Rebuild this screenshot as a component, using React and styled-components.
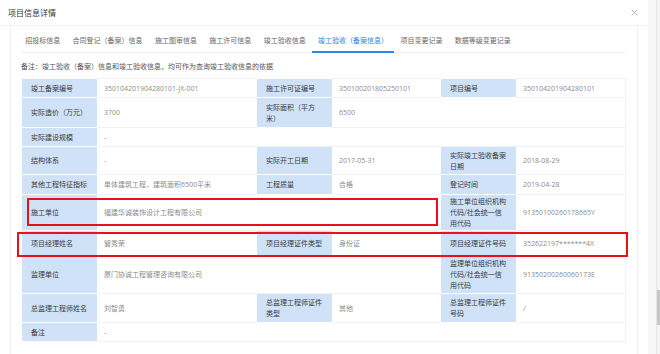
import React from "react";
import styled, { createGlobalStyle } from "styled-components";

const Global = createGlobalStyle`
  html, body { margin: 0; padding: 0; background: #fff; }
  body { font-family: "Open Sans", "Noto Sans CJK SC", sans-serif; overflow: hidden; }
  #root { width: 660px; height: 354px; }
`;

const Page = styled.div`
  display: flex;
  width: 660px;
  height: 354px;
  overflow: hidden;
`;

const Modal = styled.div`
  width: 648px;
  flex: none;
  background: #fff;
  display: flex;
  flex-direction: column;
`;

const Header = styled.div`
  height: 26px;
  flex: none;
  display: flex;
  align-items: center;
  justify-content: space-between;
  padding: 0 10px 0 8px;
  border-bottom: 1px solid #f0f0f0;
  box-sizing: border-box;
`;

const Title = styled.div`
  font-family: "Noto Sans CJK SC", sans-serif;
  font-size: 8px;
  color: #333;
`;

const Close = styled.svg`
  width: 7px;
  height: 7px;
  display: block;
`;

const Body = styled.div`
  padding: 0 10px;
  flex: 1;
  display: flex;
`;

const Panel = styled.div`
  flex: 1;
  border-left: 1px solid #f2f2f2;
  border-right: 1px solid #f2f2f2;
  padding: 0 12px 0 11px;
`;

const TabBar = styled.div`
  height: 27px;
  border-bottom: 1px solid #ececec;
  box-sizing: border-box;
  display: flex;
  align-items: stretch;
  margin: 0;
`;

const TabList = styled.div`
  display: flex;
  margin-left: -3px;
`;

const Tab = styled.div`
  padding: 0 6.2px;
  display: flex;
  align-items: center;
  font-family: "Noto Sans CJK SC", sans-serif;
  font-size: 7px;
  color: ${(p) => (p.$active ? "#2b85e4" : "#666")};
  border-bottom: 2px solid ${(p) => (p.$active ? "#2b85e4" : "transparent")};
  margin-bottom: -1px;
  padding-top: 2px;
  white-space: nowrap;
`;

const Note = styled.div`
  font-family: "Noto Sans CJK SC", sans-serif;
  font-size: 7px;
  color: #555;
  height: 25px;
  display: flex;
  align-items: center;
  margin-left: -1px;
`;

const TableWrap = styled.div`
  position: relative;
  width: 603px;
`;

const Table = styled.table`
  width: 603px;
  border-collapse: collapse;
  table-layout: fixed;
`;

const Row = styled.tr`
  height: ${(p) => p.$h}px;
`;

const Label = styled.td`
  background: #cfe2f8;
  color: #3a3a3a;
  font-family: "Noto Sans CJK SC", sans-serif;
  font-size: 7px;
  line-height: 11px;
  padding: 0 8px 0 9px;
  border-top: 1px solid #fff;
  border-bottom: 1px solid #fff;
  vertical-align: middle;
  box-sizing: border-box;
  word-break: break-all;
`;

const Value = styled.td`
  color: #8c8c8c;
  font-family: "Open Sans", "Noto Sans CJK SC", sans-serif;
  font-size: 7px;
  line-height: 11px;
  padding: 0 7px;
  border-top: 1px solid #eef0f2;
  border-bottom: 1px solid #eef0f2;
  vertical-align: middle;
  box-sizing: border-box;
  &:last-child { border-right: 1px solid #eef0f2; }
`;

const Mark = styled.div`
  position: absolute;
  border: 2px solid #e3121c;
  box-sizing: border-box;
  pointer-events: none;
`;

const Gutter = styled.div`
  flex: 1;
  background: #f6f6f6;
  display: flex;
  justify-content: flex-end;
`;

const Track = styled.div`
  width: 3px;
  border-left: 1px solid #e4e4e4;
  background: #f3f3f3;
  display: flex;
  flex-direction: column;
`;

const Thumb = styled.div`
  margin-top: 290px;
  height: 35px;
  background: #c6c6c6;
`;

const tabs = [
  "招投标信息",
  "合同登记（备案）信息",
  "施工图审信息",
  "施工许可信息",
  "竣工验收信息",
  "竣工验收（备案信息）",
  "项目变更记录",
  "数据等级变更记录",
];

export default function App() {
  return (
    <Page>
      <Global />
      <Modal>
        <Header>
          <Title>项目信息详情</Title>
          <Close viewBox="0 0 10 10">
            <path d="M1 1L9 9M9 1L1 9" stroke="#999" strokeWidth="1" fill="none" />
          </Close>
        </Header>
        <Body>
          <Panel>
            <TabBar>
              <TabList>
                {tabs.map((t, i) => (
                  <Tab key={t} $active={i === 5}>{t}</Tab>
                ))}
              </TabList>
            </TabBar>
            <Note>备注：竣工验收（备案）信息和竣工验收信息，均可作为查询竣工验收信息的依据</Note>
            <TableWrap>
              <Table>
                <colgroup>
                  <col style={{ width: 75 }} />
                  <col style={{ width: 160 }} />
                  <col style={{ width: 75 }} />
                  <col style={{ width: 109 }} />
                  <col style={{ width: 75 }} />
                  <col style={{ width: 109 }} />
                </colgroup>
                <tbody>
                  <Row $h={19}>
                    <Label>竣工备案编号</Label>
                    <Value>350104201904280101-JX-001</Value>
                    <Label>施工许可证编号</Label>
                    <Value>350100201805250101</Value>
                    <Label>项目编号</Label>
                    <Value>350104201904280101</Value>
                  </Row>
                  <Row $h={30}>
                    <Label>实际造价（万元）</Label>
                    <Value>3700</Value>
                    <Label>实际面积（平方米）</Label>
                    <Value colSpan={3}>6500</Value>
                  </Row>
                  <Row $h={19}>
                    <Label>实际建设规模</Label>
                    <Value colSpan={5}>-</Value>
                  </Row>
                  <Row $h={28}>
                    <Label>结构体系</Label>
                    <Value>-</Value>
                    <Label>实际开工日期</Label>
                    <Value>2017-05-31</Value>
                    <Label>实际竣工验收备案日期</Label>
                    <Value>2018-08-29</Value>
                  </Row>
                  <Row $h={20}>
                    <Label>其他工程特征指标</Label>
                    <Value>单体建筑工程，建筑面积6500平米</Value>
                    <Label>工程质量</Label>
                    <Value>合格</Value>
                    <Label>登记时间</Label>
                    <Value>2019-04-28</Value>
                  </Row>
                  <Row $h={36}>
                    <Label>施工单位</Label>
                    <Value colSpan={3}>福建华诚装饰设计工程有限公司</Value>
                    <Label>施工单位组织机构代码/社会统一信用代码</Label>
                    <Value>91350100260178665Y</Value>
                  </Row>
                  <Row $h={25}>
                    <Label>项目经理姓名</Label>
                    <Value>管秀荣</Value>
                    <Label>项目经理证件类型</Label>
                    <Value>身份证</Value>
                    <Label>项目经理证件号码</Label>
                    <Value>352622197*******4X</Value>
                  </Row>
                  <Row $h={38}>
                    <Label>监理单位</Label>
                    <Value colSpan={3}>厦门协诚工程管理咨询有限公司</Value>
                    <Label>监理单位组织机构代码/社会统一信用代码</Label>
                    <Value>91350200260060173E</Value>
                  </Row>
                  <Row $h={29}>
                    <Label>总监理工程师姓名</Label>
                    <Value>刘智勇</Value>
                    <Label>总监理工程师证件类型</Label>
                    <Value>其他</Value>
                    <Label>总监理工程师证件号码</Label>
                    <Value>/</Value>
                  </Row>
                  <Row $h={19}>
                    <Label>备注</Label>
                    <Value colSpan={5}>-</Value>
                  </Row>
                </tbody>
              </Table>
              <Mark style={{ left: 5, top: 120, width: 411, height: 28 }} />
              <Mark style={{ left: -5, top: 154, width: 611, height: 25 }} />
            </TableWrap>
          </Panel>
        </Body>
      </Modal>
      <Gutter>
        <Track>
          <Thumb />
        </Track>
      </Gutter>
    </Page>
  );
}
